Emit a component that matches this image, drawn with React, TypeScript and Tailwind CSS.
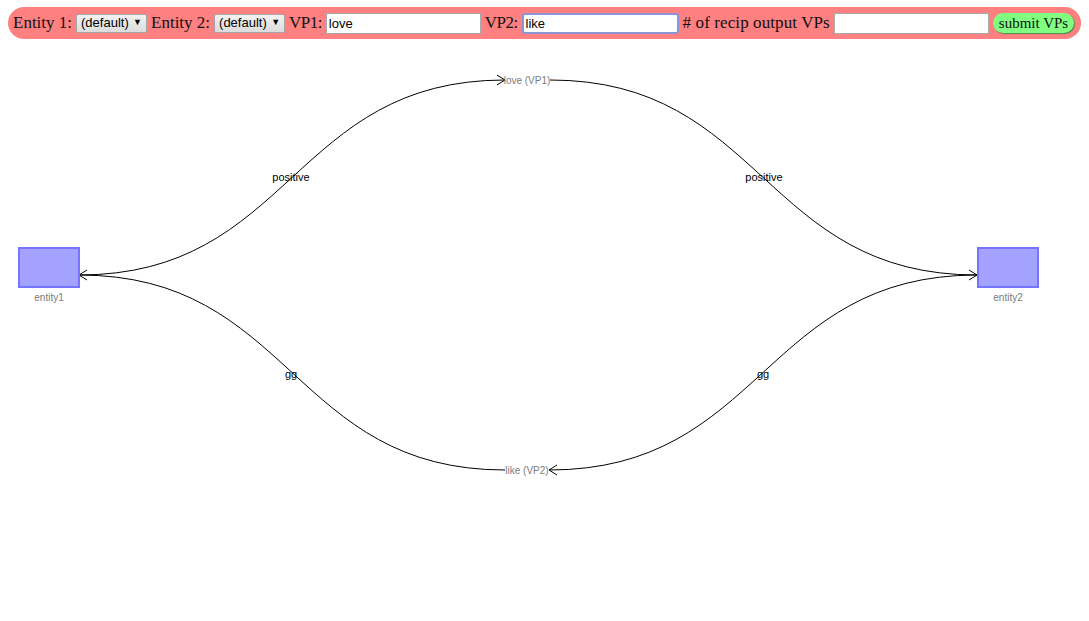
import React from "react"

const serif = { fontFamily: '"Liberation Serif", "Times New Roman", serif' }
const sans = '"Liberation Sans", Arial, sans-serif'

function Picker() {
    return (
        <button
            type="button"
            className="flex shrink-0 items-center h-[19px] w-[71px] pl-[4px] pr-[4px] border border-[#a6a6a6] rounded-[2px] bg-gradient-to-b from-[#f2f2f2] to-[#dcdcdc] text-[13px] text-black"
            style={{ fontFamily: sans }}
        >
            <span>(default)</span>
            <span className="ml-auto text-[9px]">▼</span>
        </button>
    )
}

function Field({ value, focused = false }: { value: string; focused?: boolean }) {
    return (
        <input
            defaultValue={value}
            className={`shrink-0 h-[21px] bg-white px-[2px] text-[13px] text-black outline-none ${
                focused ? "w-[157px] border-2 border-[#8a94d8] rounded-[3px]" : "w-[155px] border border-[#a9a9a9]"
            }`}
            style={{ fontFamily: sans }}
        />
    )
}

function Arrow({ x, y, dir }: { x: number; y: number; dir: 1 | -1 }) {
    // open chevron, dir 1 points right, -1 points left
    const bx = x - dir * 8
    return <polyline points={`${bx},${y - 5} ${x},${y} ${bx},${y + 5}`} fill="none" stroke="#000" strokeWidth={1} />
}

function Entity({ x, label }: { x: number; label: string }) {
    return (
        <g>
            <rect x={x} y={248} width={60} height={39} fill="#a3a3ff" stroke="#7474ff" strokeWidth={2} />
            <text x={x + 30} y={301} textAnchor="middle" fontSize={10} fill="#7a7a7a" fontFamily={sans}>
                {label}
            </text>
        </g>
    )
}

function Graph() {
    const edge = "fill-none stroke-black"
    return (
        <svg width={1089} height={582} viewBox="0 39 1089 582" className="block">
            {/* edge labels sit under the curves */}
            <g fontFamily={sans} fontSize={11} fill="#000" textAnchor="middle">
                <text x={291} y={181}>positive</text>
                <text x={764} y={181}>positive</text>
                <text x={291} y={378}>gg</text>
                <text x={763} y={378}>gg</text>
            </g>

            <path className={edge} d="M79,275 C292,275 292,80 505,80" />
            <path className={edge} d="M550,80 C763,80 763,275 977,275" />
            <path className={edge} d="M977,275 C763,275 763,470 549,470" />
            <path className={edge} d="M505,470 C292,470 292,275 79,275" />

            <Arrow x={505} y={80} dir={1} />
            <Arrow x={977} y={275} dir={1} />
            <Arrow x={549} y={470} dir={-1} />
            <Arrow x={79} y={275} dir={-1} />

            <g fontFamily={sans} fontSize={10} fill="#7d7d7d" textAnchor="middle">
                <text x={527} y={84}>love (VP1)</text>
                <text x={527} y={474}>like (VP2)</text>
            </g>

            <Entity x={19} label="entity1" />
            <Entity x={978} label="entity2" />
        </svg>
    )
}

export default function App() {
    return (
        <div className="w-[1089px] h-[621px] bg-white overflow-hidden">
            <div className="pt-[7px] px-[8px]">
                <div
                    className="flex items-center gap-[4px] h-[32px] pl-[5px] pr-[8px] rounded-full bg-[#ff8080] text-[17px] text-[#111] whitespace-nowrap"
                    style={serif}
                >
                    <span className="shrink-0">Entity 1:</span>
                    <Picker />
                    <span className="shrink-0">Entity 2:</span>
                    <Picker />
                    <span className="shrink-0 tracking-[-0.55px]">VP1:</span>
                    <Field value="love" />
                    <span className="shrink-0 tracking-[-0.55px]">VP2:</span>
                    <Field value="like" focused />
                    <span className="shrink-0 tracking-[0.1px]"># of recip output VPs</span>
                    <Field value="" />
                    <button
                        type="button"
                        className="shrink-0 h-[20px] px-[6px] rounded-full bg-[#80ff80] text-[15px] leading-none text-[#111] shadow-[1px_1px_1px_#4a8a4a]"
                        style={serif}
                    >
                        submit VPs
                    </button>
                </div>
            </div>
            <Graph />
        </div>
    )
}
